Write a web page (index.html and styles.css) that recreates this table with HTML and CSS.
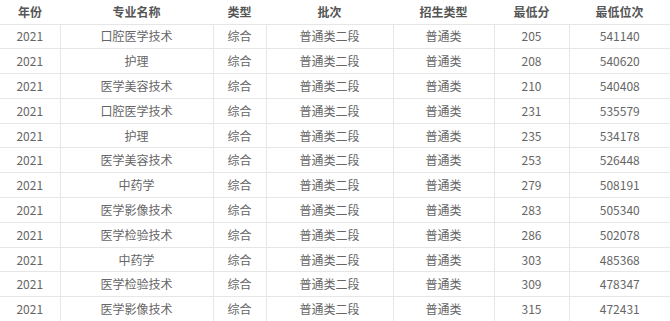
FILE: index.html
```html
<!DOCTYPE html>
<html lang="zh-CN">
<head>
    <meta charset="UTF-8">
    <title>录取分数</title>
    <link rel="stylesheet" href="styles.css">
</head>
<body>
    <table class="score-table">
        <colgroup>
            <col style="width: 60px">
            <col style="width: 153px">
            <col style="width: 53px">
            <col style="width: 127px">
            <col style="width: 101px">
            <col style="width: 75px">
            <col style="width: 101px">
        </colgroup>
        <thead>
            <tr>
                <th>年份</th>
                <th>专业名称</th>
                <th>类型</th>
                <th>批次</th>
                <th>招生类型</th>
                <th>最低分</th>
                <th>最低位次</th>
            </tr>
        </thead>
        <tbody>
            <tr><td>2021</td><td>口腔医学技术</td><td>综合</td><td>普通类二段</td><td>普通类</td><td>205</td><td>541140</td></tr>
            <tr><td>2021</td><td>护理</td><td>综合</td><td>普通类二段</td><td>普通类</td><td>208</td><td>540620</td></tr>
            <tr><td>2021</td><td>医学美容技术</td><td>综合</td><td>普通类二段</td><td>普通类</td><td>210</td><td>540408</td></tr>
            <tr><td>2021</td><td>口腔医学技术</td><td>综合</td><td>普通类二段</td><td>普通类</td><td>231</td><td>535579</td></tr>
            <tr><td>2021</td><td>护理</td><td>综合</td><td>普通类二段</td><td>普通类</td><td>235</td><td>534178</td></tr>
            <tr><td>2021</td><td>医学美容技术</td><td>综合</td><td>普通类二段</td><td>普通类</td><td>253</td><td>526448</td></tr>
            <tr><td>2021</td><td>中药学</td><td>综合</td><td>普通类二段</td><td>普通类</td><td>279</td><td>508191</td></tr>
            <tr><td>2021</td><td>医学影像技术</td><td>综合</td><td>普通类二段</td><td>普通类</td><td>283</td><td>505340</td></tr>
            <tr><td>2021</td><td>医学检验技术</td><td>综合</td><td>普通类二段</td><td>普通类</td><td>286</td><td>502078</td></tr>
            <tr><td>2021</td><td>中药学</td><td>综合</td><td>普通类二段</td><td>普通类</td><td>303</td><td>485368</td></tr>
            <tr><td>2021</td><td>医学检验技术</td><td>综合</td><td>普通类二段</td><td>普通类</td><td>309</td><td>478347</td></tr>
            <tr><td>2021</td><td>医学影像技术</td><td>综合</td><td>普通类二段</td><td>普通类</td><td>315</td><td>472431</td></tr>
        </tbody>
    </table>
</body>
</html>
```

FILE: styles.css
```css
* {
    margin: 0;
    padding: 0;
    box-sizing: border-box;
}

body {
    background-color: #ffffff;
    font-family: "Noto Sans CJK SC", "Noto Sans", sans-serif;
    overflow: hidden;
}

.score-table {
    width: 670px;
    border-collapse: collapse;
    table-layout: fixed;
    font-size: 12px;
    color: #666666;
}

.score-table th {
    height: 24px;
    font-weight: 700;
    color: #555555;
    text-align: center;
    border-bottom: 1px solid #e6e6e6;
    line-height: 1;
}

.score-table td {
    height: 24.8px;
    text-align: center;
    border: 1px solid #e6e6e6;
    border-top: none;
    line-height: 1;
}

.score-table td:first-child {
    border-left: none;
}

.score-table td:last-child {
    border-right: none;
}
```
